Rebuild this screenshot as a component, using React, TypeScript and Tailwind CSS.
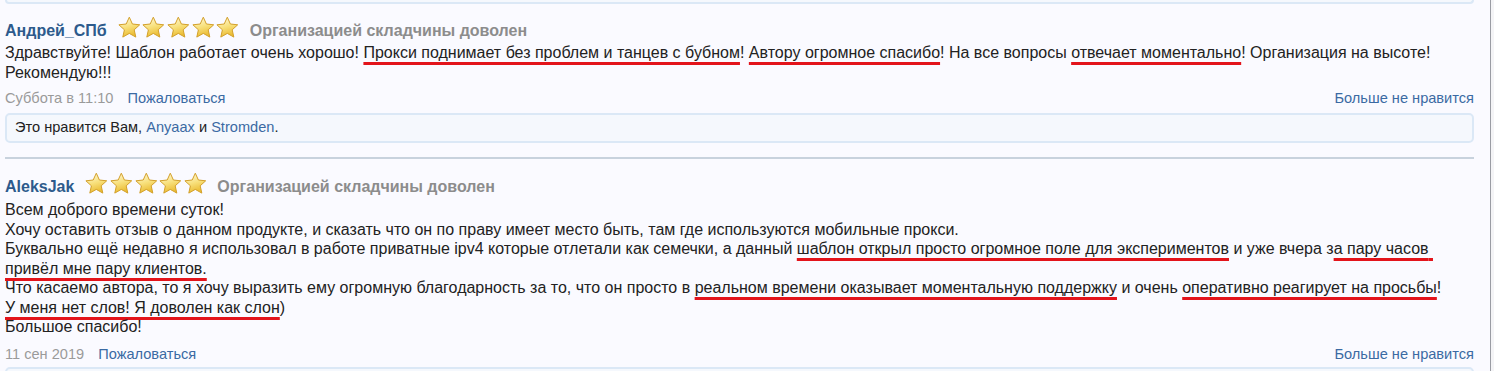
import React from "react";

const font = { fontFamily: '"Liberation Sans", Arial, sans-serif' };

function Star({ id }: { id: string }) {
  return (
    <svg width="24.6" height="23" viewBox="0 0 24 23">
      <defs>
        <linearGradient id={id} x1="0" y1="0" x2="0.3" y2="1">
          <stop offset="0" stopColor="#fffbe4" />
          <stop offset="0.55" stopColor="#f8e17e" />
          <stop offset="1" stopColor="#ebbd35" />
        </linearGradient>
      </defs>
      <path
        d="M12 1.2l3.1 6.8 7.3.8-5.5 5 1.6 7.3L12 17.4l-6.5 3.7 1.6-7.3-5.5-5 7.3-.8z"
        fill={`url(#${id})`}
        stroke="#d3a02a"
        strokeWidth="1"
        strokeLinejoin="round"
      />
    </svg>
  );
}

function Stars({ prefix }: { prefix: string }) {
  return (
    <div className="flex items-center -mt-[8px]">
      {[0, 1, 2, 3, 4].map((i) => (
        <Star key={i} id={`${prefix}-${i}`} />
      ))}
    </div>
  );
}

// red marker underline, like the hand-drawn one on the screenshot
function U({ children }: { children: React.ReactNode }) {
  return (
    <span className="underline decoration-[#e3141b] decoration-[2.5px] underline-offset-[4px] [text-decoration-skip-ink:none]">
      {children}
    </span>
  );
}

function Header({ name, prefix }: { name: string; prefix: string }) {
  return (
    <div className="flex items-center h-[24px] gap-[10px]">
      <a className="text-[16px] font-bold text-[#2d5a8c]">{name}</a>
      <Stars prefix={prefix} />
      <span className="text-[16px] font-bold text-[#8c8c8c]">
        Организацией складчины доволен
      </span>
    </div>
  );
}

function Meta({ date }: { date: string }) {
  return (
    <div className="flex items-center justify-between text-[14.6px] leading-[17px]">
      <div className="flex gap-[14px]">
        <span className="text-[#9a9a9a]">{date}</span>
        <a className="text-[#3b6aa3]">Пожаловаться</a>
      </div>
      <a className="text-[#3b6aa3]">Больше не нравится</a>
    </div>
  );
}

function LikeBox({ children }: { children?: React.ReactNode }) {
  return (
    <div className="h-[30px] flex items-center px-[8px] rounded-[5px] border-2 border-[#dbe8f6] bg-[#f5f8fd] text-[14.6px] text-[#222]">
      {children}
    </div>
  );
}

export default function App() {
  return (
    <div style={font} className="flex w-[1494px] h-[371px] overflow-hidden bg-[#f2f2f4]">
      <div className="w-[1491px] shrink-0 bg-[#fafaff] border-r border-[#9a9ca3] pl-[5px] pr-[16px]">
        {/* bottom of the previous like box */}
        <div className="h-[4px] rounded-b-[5px] border-2 border-t-0 border-[#dbe8f6] bg-[#f5f8fd]" />

        {/* first review */}
        <div className="pt-[15px]">
          <Header name="Андрей_СПб" prefix="a" />
          <div className="text-[16px] leading-[19.5px] text-[#222]">
            Здравствуйте! Шаблон работает очень хорошо! <U>Прокси поднимает без проблем и танцев с бубном</U>!{" "}
            <U>Автору огромное спасибо</U>! На все вопросы <U>отвечает моментально</U>! Организация на высоте!
            Рекомендую!!!
          </div>
          <div className="mt-[8px]">
            <Meta date="Суббота в 11:10" />
          </div>
          <div className="mt-[6px]">
            <LikeBox>
              <span>
                Это нравится Вам, <a className="text-[#3b6aa3]">Anyaax</a> и{" "}
                <a className="text-[#3b6aa3]">Stromden</a>.
              </span>
            </LikeBox>
          </div>
        </div>

        <div className="mt-[14px] h-[2px] bg-[#c8d2dd]" />

        {/* second review */}
        <div className="pt-[16px]">
          <Header name="AleksJak" prefix="b" />
          <div className="mt-[1px] text-[16px] leading-[19.5px] text-[#222]">
            Всем доброго времени суток!
            <br />
            Хочу оставить отзыв о данном продукте, и сказать что он по праву имеет место быть, там где используются
            мобильные прокси.
            <br />
            Буквально ещё недавно я использовал в работе приватные ipv4 которые отлетали как семечки, а данный{" "}
            <U>шаблон открыл просто огромное поле для экспериментов</U> и уже вчера з<U>а пару часов{"\u00a0"}</U>
            <br />
            <U>привёл мне пару клиентов.</U>
            <br />
            Что касаемо автора, то я хочу выразить ему огромную благодарность за то, что он просто в{" "}
            <U>реальном времени оказывает моментальную поддержку</U> и очень <U>оперативно реагирует на просьбы</U>!
            <br />
            <U>У меня нет слов! Я доволен как слон</U>)
            <br />
            Большое спасибо!
          </div>
          <div className="mt-[9px]">
            <Meta date="11 сен 2019" />
          </div>
          <div className="mt-[4px]">
            <LikeBox />
          </div>
        </div>
      </div>
      <div className="flex-1 bg-[#f4f4f6]" />
    </div>
  );
}
